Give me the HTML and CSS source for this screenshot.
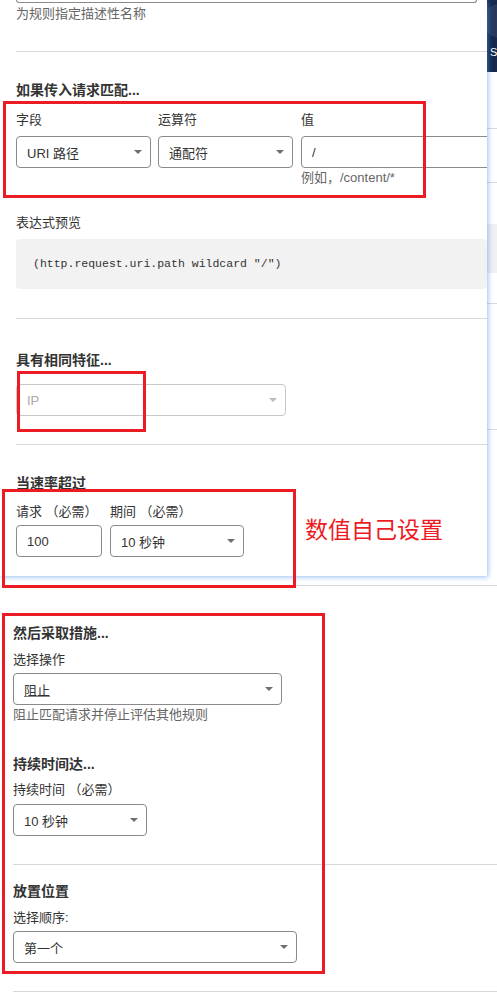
FILE: index.html
```html
<!DOCTYPE html>
<html lang="zh-CN">
<head>
  <meta charset="UTF-8">
  <meta name="viewport" content="width=device-width, initial-scale=1.0">
  <title>速率限制规则</title>
  <link rel="stylesheet" href="styles.css">
</head>
<body>
  <div class="screen">
    <div class="top">
      <section class="panel">
        <div class="name-tail"></div>
        <p class="hint first">为规则指定描述性名称</p>
        <hr class="rule">

        <h3 class="heading">如果传入请求匹配...</h3>
        <div class="fields">
          <div class="field w-field">
            <span class="label">字段</span>
            <div class="control select"><span>URI 路径</span><i class="caret"></i></div>
          </div>
          <div class="field w-field">
            <span class="label">运算符</span>
            <div class="control select"><span>通配符</span><i class="caret"></i></div>
          </div>
          <div class="field w-value">
            <span class="label">值</span>
            <div class="control"><span>/</span></div>
            <p class="hint">例如，/content/*</p>
          </div>
        </div>
        <span class="label preview-label">表达式预览</span>
        <div class="code">(http.request.uri.path wildcard "/")</div>
        <hr class="rule rule-code">

        <h3 class="heading heading-same">具有相同特征...</h3>
        <div class="control select disabled w-ip"><span>IP</span><i class="caret"></i></div>
        <hr class="rule">

        <h3 class="heading">当速率超过</h3>
        <div class="fields rate">
          <div class="field w-count">
            <span class="label">请求 （必需）</span>
            <div class="control"><span>100</span></div>
          </div>
          <div class="field w-period">
            <span class="label">期间 （必需）</span>
            <div class="control select"><span>10 秒钟</span><i class="caret"></i></div>
          </div>
        </div>
      </section>

      <aside class="behind">
        <div class="behind-head">
          <span class="avatar"></span>
          <span class="behind-letter">S</span>
        </div>
        <div class="behind-line l1"></div>
        <div class="behind-line l2"></div>
        <div class="behind-box"></div>
        <div class="behind-line l3"></div>
        <div class="behind-line l4"></div>
      </aside>
    </div>

    <main class="page">
      <hr class="rule rule-top">

      <h3 class="heading heading-action">然后采取措施...</h3>
      <span class="label">选择操作</span>
      <div class="control select w-action"><span class="underlined">阻止</span><i class="caret"></i></div>
      <p class="hint">阻止匹配请求并停止评估其他规则</p>

      <h3 class="heading heading-duration">持续时间达...</h3>
      <span class="label">持续时间 （必需）</span>
      <div class="control select w-duration"><span>10 秒钟</span><i class="caret"></i></div>
      <hr class="rule">

      <h3 class="heading heading-place">放置位置</h3>
      <span class="label">选择顺序:</span>
      <div class="control select w-order"><span>第一个</span><i class="caret"></i></div>
      <hr class="rule">
    </main>

    <!-- annotations drawn over the screenshot -->
    <div class="mark mark-match"></div>
    <div class="mark mark-ip"></div>
    <div class="mark mark-rate"></div>
    <div class="mark mark-action"></div>
    <div class="note">数值自己设置</div>
  </div>
</body>
</html>
```

FILE: styles.css
```css
body {
  margin: 0;
  font-family: "Liberation Sans", "Noto Sans CJK SC", sans-serif;
  font-size: 13px;
  color: #333;
  background: #fff;
}
.screen {
  position: relative;
  width: 497px;
  height: 1005px;
  overflow: hidden;
}
.top {
  display: flex;
}

/* side panel on top of the page */
.panel {
  position: relative;
  z-index: 1;
  width: 487px;
  flex: none;
  box-sizing: border-box;
  padding: 0 0 19px 16px;
  background: #fff;
  overflow: hidden;
  box-shadow: 1px 1px 5px rgba(80, 145, 235, 0.6);
}
.name-tail {
  width: 461px;
  height: 3px;
  box-sizing: border-box;
  border: 1px solid #8a8a8a;
  border-top: 0;
  border-radius: 0 0 4px 4px;
}
.hint {
  margin: 1px 0 0;
  line-height: 18px;
  color: #666;
}
.hint.first {
  margin-top: 2px;
}
.rule {
  margin: 28px 0 0;
  height: 0;
  border: 0;
  border-top: 1px solid #d9d9d9;
}
.rule-code {
  margin-top: 29px;
}
.heading {
  margin: 28px 0 0;
  font-size: 14px;
  line-height: 20px;
  font-weight: bold;
  color: #333;
}
.heading-same {
  margin-top: 31px;
}
.label {
  display: block;
  line-height: 18px;
}
.fields {
  display: flex;
  gap: 7px;
  margin-top: 11px;
}
.fields.rate {
  gap: 8px;
  margin-top: 10px;
}
.fields.rate .control {
  margin-top: 4px;
}
.field {
  flex: none;
}
.w-field { width: 135px; }
.w-field + .w-field { margin-right: 1px; }
.w-value { width: 200px; }
.w-count { width: 86px; }
.w-period { width: 134px; }
.w-action { width: 269px; }
.w-duration { width: 134px; }
.w-order { width: 284px; }

.control {
  display: flex;
  align-items: center;
  height: 32px;
  margin-top: 7px;
  box-sizing: border-box;
  padding: 0 8px 0 10px;
  border: 1px solid #8a8a8a;
  border-radius: 4px;
  background: #fff;
  font-size: 13px;
  color: #333;
}
.control.w-ip {
  width: 270px;
  margin-top: 14px;
}
.caret {
  margin-left: auto;
  width: 0;
  height: 0;
  border-left: 4px solid transparent;
  border-right: 4px solid transparent;
  border-top: 4px solid #6e6e6e;
}
.control.disabled {
  border-color: #c9c9c9;
  color: #aaa;
}
.control.disabled .caret {
  border-top-color: #bbb;
}
.underlined {
  text-decoration: underline;
  text-decoration-color: #888;
}

.preview-label {
  margin-top: 27px;
}
.code {
  height: 50px;
  margin-top: 7px;
  padding-left: 17px;
  border-radius: 4px;
  background: #f2f2f2;
  font-family: "Liberation Mono", monospace;
  font-size: 11.5px;
  line-height: 50px;
  color: #333;
  white-space: nowrap;
}

/* the page seen behind the panel */
.behind {
  flex: 1;
  overflow: hidden;
  background: #fff;
}
.behind-head {
  position: relative;
  height: 72px;
  background: #14294b;
}
.avatar {
  position: absolute;
  left: -4px;
  top: 4px;
  width: 34px;
  height: 34px;
  border-radius: 50%;
  background: #26395a;
}
.behind-letter {
  position: absolute;
  left: 3px;
  top: 45px;
  font-size: 11px;
  line-height: 14px;
  color: #fff;
}
.behind-line {
  height: 1px;
  background: #d9d9d9;
}
.l1 { margin-top: 56px; }
.l2 { margin-top: 53px; }
.behind-box {
  height: 49px;
  margin-top: 41px;
  background: #f0f0f0;
}
.l3 { margin-top: 30px; }
.l4 { margin-top: 125px; }

/* the page below the panel */
.page {
  padding-left: 13px;
}
.rule-top {
  margin-top: 9px;
}
.heading-action {
  margin-top: 37px;
}
.page .heading + .label {
  margin-top: 8px;
}
.page .control {
  margin-top: 4px;
}
.heading-duration {
  margin-top: 30px;
}
.page .heading-duration + .label {
  margin-top: 7px;
}
.page .w-duration {
  margin-top: 5px;
}
.heading-place {
  margin-top: 16px;
}

/* red annotation layer */
.mark {
  position: absolute;
  z-index: 2;
  box-sizing: border-box;
  border: 3px solid #ec1c24;
}
.mark-match { left: 3px; top: 101px; width: 423px; height: 97px; }
.mark-ip { left: 17px; top: 371px; width: 129px; height: 61px; }
.mark-rate { left: 2px; top: 489px; width: 294px; height: 99px; }
.mark-action { left: 2px; top: 613px; width: 323px; height: 361px; }
.note {
  position: absolute;
  z-index: 2;
  left: 305px;
  top: 514px;
  font-family: "Noto Sans CJK SC", sans-serif;
  font-size: 23px;
  line-height: 28px;
  color: #ec1c24;
}
```
